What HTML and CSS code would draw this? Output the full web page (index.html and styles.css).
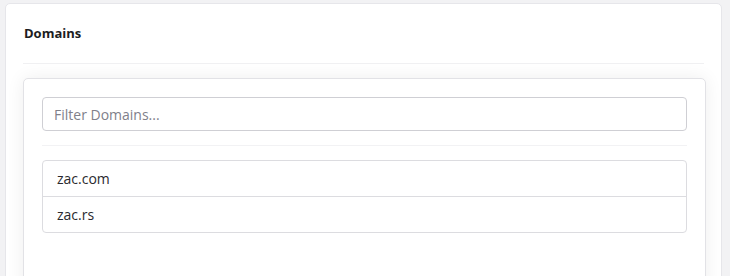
FILE: index.html
```html
<!DOCTYPE html>
<html lang="en">
<head>
    <meta charset="UTF-8">
    <meta name="viewport" content="width=device-width, initial-scale=1.0">
    <title>Domains</title>
    <link rel="stylesheet" href="styles.css">
</head>
<body>
    <div class="panel">
        <div class="panel-header">
            <h2>Domains</h2>
        </div>
        <div class="panel-body">
            <div class="card">
                <input type="text" class="filter" placeholder="Filter Domains...">
                <hr class="divider">
                <ul class="domain-list">
                    <li>zac.com</li>
                    <li>zac.rs</li>
                </ul>
            </div>
        </div>
    </div>
</body>
</html>
```

FILE: styles.css
```css
body {
    margin: 0;
    padding: 3px 8px 0 5px;
    background: #f2f2f4;
    font-family: "Open Sans", "Noto Sans", Arial, sans-serif;
    color: #222;
}
.panel {
    background: #fff;
    border: 1px solid #e6e6ea;
    border-radius: 5px;
    padding-bottom: 20px;
}
.panel-header {
    margin: 0 17px;
    padding: 19px 0 20px 1px;
    border-bottom: 1px solid #f0f0f2;
}
.panel-header h2 {
    margin: 0;
    font-size: 13px;
    line-height: 20px;
    font-weight: 700;
    color: #1c1c1e;
}
.panel-body {
    padding: 14px 15px 0 17px;
}
.card {
    background: #fff;
    border: 1px solid #e2e2e6;
    border-radius: 5px;
    padding: 18px 18px 60px 18px;
    box-shadow: 0 0 18px rgba(0, 0, 0, 0.07);
}
.filter {
    display: block;
    width: 100%;
    box-sizing: border-box;
    height: 34px;
    padding: 0 11px;
    border: 1px solid #cfcfd4;
    border-radius: 4px;
    font-family: inherit;
    font-size: 14px;
    color: #333;
}
.filter::placeholder {
    color: #80808a;
}
.divider {
    border: none;
    border-top: 1px solid #f2f2f4;
    margin: 14px 0 14px 0;
}
.domain-list {
    list-style: none;
    margin: 0;
    padding: 0;
    border: 1px solid #dcdce0;
    border-radius: 4px;
}
.domain-list li {
    height: 35px;
    line-height: 35px;
    padding: 0 14px;
    font-size: 14px;
    color: #2a2a2e;
}
.domain-list li + li {
    border-top: 1px solid #dcdce0;
}
```
